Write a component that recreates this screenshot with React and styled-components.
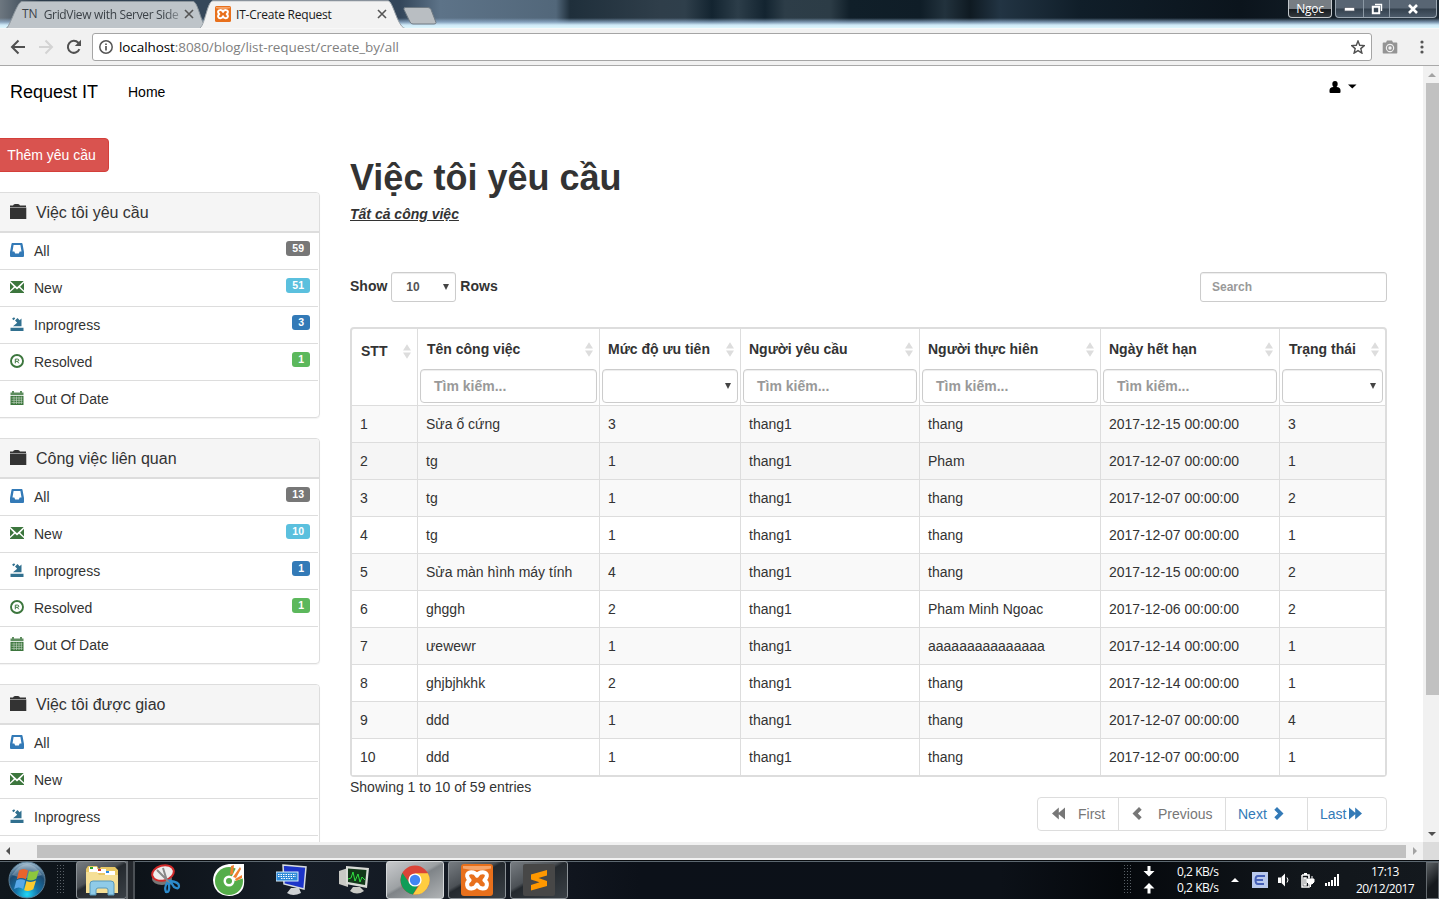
import React from 'react';
import styled, { createGlobalStyle, css } from 'styled-components';

const Global = createGlobalStyle`
  * { box-sizing: border-box; }
  body { margin: 0; background: #fff; overflow: hidden; }
  svg { display: block; flex: none; }
`;

const ui = '"Open Sans", "Noto Sans", sans-serif';
const page = '"Liberation Sans", Arial, sans-serif';

const Screen = styled.div`
  width: 1439px; height: 899px; overflow: hidden;
  display: flex; flex-direction: column;
  font: 14px/20px ${page}; color: #333; background: #fff;
`;

/* ---------- browser window ---------- */
const TitleBar = styled.div`
  height: 28px; flex: none; display: flex; align-items: flex-start; position: relative;
  background:
    linear-gradient(180deg, transparent 0 18px, rgba(148,178,208,.75) 22px, #cfeaf8 25px, #def6fc 28px),
    linear-gradient(90deg, #6d7780 0, #2c3b4a 40px, #35475a 200px, #33465a 400px, #5d7388 440px, #52677a 556px, #1f2f3b 570px, #2f3e4a 660px, #2f3f4b 685px, #132430 712px, #2c3d49 738px, #132430 765px, #2d3d48 785px, #2c3c46 830px, #101f29 850px, #0f1d27 920px, #22323d 945px, #0f1a22 970px, #223443 1000px, #101e29 1080px, #0b141c 1240px, #1d2a35 1439px);
`;
const Tab = styled.div`
  position: relative; height: 28px; display: flex; align-items: center;
  width: ${p => p.$w}px; margin-left: ${p => p.$ml || 0}px; padding-left: ${p => p.$pl}px;
  z-index: ${p => (p.$active ? 2 : 1)};
  font: 12px/16px ${ui}; color: ${p => (p.$active ? '#1a1a1a' : '#3c4248')};
  > * { position: relative; }
`;
const TabShape = styled.svg`
  && { position: absolute; left: 0; top: 0; }
`;
const TabTitle = styled.span`
  white-space: nowrap; overflow: hidden; margin-left: ${p => p.$ml || 0}px; width: ${p => p.$w}px;
  letter-spacing: ${p => p.$ls || 0}px; margin-top: 1px;
  ${p => p.$fade && css`mask-image: linear-gradient(90deg, #000 86%, rgba(0,0,0,.15) 100%);`}
`;
const NewTab = styled.div`
  width: 34px; height: 18px; margin: 7px 0 0 -2px; z-index: 3;
`;
const WindowControls = styled.div`
  margin-left: auto; display: flex; height: 19px; gap: 3px; margin-right: 2px;
`;
const UserTag = styled.div`
  width: 44px; height: 18px; border: 1px solid #c3c8cc; border-top: 0; border-radius: 0 0 4px 4px;
  background: linear-gradient(#777d83 0 50%, #15191d 52%, #34393e);
  color: #fff; font: 12px/17px ${ui}; letter-spacing: -.3px; text-align: center;
`;
const ControlGroup = styled.div`
  display: flex; height: 18px; border: 1px solid #9ba7b2; border-top: 0; border-radius: 0 0 4px 4px;
  background: linear-gradient(#586573 0 48%, #33404d 52%, #4b5a69);
`;
const Control = styled.div`
  width: ${p => p.$w}px; display: flex; align-items: center; justify-content: center;
  padding-top: ${p => p.$pt || 0}px;
  & + & { border-left: 1px solid #8b98a4; }
`;

const AddressBar = styled.div`
  height: 38px; flex: none; display: flex; align-items: center; background: #f1f1f1;
  border-bottom: 1px solid #a9a9a9; border-top: 1px solid #f8f8f8; padding-left: 10px;
`;
const NavIcons = styled.div`
  display: flex; gap: 12px; width: 82px;
`;
const UrlBox = styled.div`
  width: 1280px; height: 28px; border: 1px solid #a5a5a5; border-radius: 3px; background: #fff;
  display: flex; align-items: center; padding: 0 6px 1px 5px;
`;
const Url = styled.span`
  font: 13.5px/20px ${ui}; color: #000; margin-left: 5px; flex: 1; letter-spacing: -.08px;
  span { color: #7f7f7f; }
`;
const ToolIcons = styled.div`
  display: flex; align-items: center; gap: 22px; padding-left: 10px;
`;

/* ---------- viewport and scrollbars ---------- */
const Viewport = styled.div`
  flex: 1; min-height: 0; display: flex;
`;
const Document = styled.div`
  width: 1423px; overflow: hidden;
`;
const VScroll = styled.div`
  width: 16px; background: #f1f1f1; display: flex; flex-direction: column; align-items: center;
  padding: 6px 0 5px 1px; justify-content: space-between;
`;
const VThumb = styled.div`
  width: 13px; height: 612px; background: #c1c1c1; margin: 5px 0 auto 1px;
`;
const HScroll = styled.div`
  height: 18px; flex: none; background: #f1f1f1; display: flex; align-items: center; padding-left: 5px;
`;
const HThumb = styled.div`
  width: 1369px; height: 13px; background: #c1c1c1; margin: 0 6px 0 27px;
`;
const Corner = styled.div`
  margin-left: auto; width: 16px; height: 18px; background: #dcdcdc;
`;

/* ---------- page ---------- */
const Navbar = styled.div`
  height: 52px; display: flex; align-items: center; padding-left: 10px; color: #000;
`;
const Brand = styled.div`
  font-size: 18px; width: 118px;
`;
const UserMenu = styled.div`
  margin: -11px 66px 0 auto; display: flex; align-items: center; gap: 7px;
`;
const Columns = styled.div`
  display: flex;
`;
const Sidebar = styled.div`
  width: 320px; padding-top: 20px; flex: none;
`;
const AddButton = styled.button`
  display: block; height: 34px; width: 115px; margin: 0 0 20px -6px; padding: 0 12px;
  font: 14px/20px ${page}; color: #fff; background: #d9534f; border: 1px solid #d43f3a; border-radius: 4px;
  white-space: nowrap;
`;
const Panel = styled.section`
  margin: 0 0 20px -6px; height: 226px; border: 1px solid #ddd; border-radius: 4px;
  box-shadow: 0 1px 1px rgba(0,0,0,.05); overflow: hidden;
`;
const PanelHeading = styled.h4`
  margin: 0; height: 40px; background: #f5f5f5; border-bottom: 2px solid #ddd;
  display: flex; align-items: center; padding: 1px 0 0 15px; font-size: 16px; font-weight: 400; gap: 9px;
  svg { margin-top: -2px; }
`;
const PanelItem = styled.div`
  height: 37px; margin-right: 1px; display: flex; align-items: center; padding: 0 8px 0 14px;
  border-bottom: 1px solid #ddd;
  &:nth-child(6) { border-bottom: 0; height: 36px; }
`;
const ItemIcon = styled.span`
  width: 25px; margin-top: -2px; padding-left: 1px;
`;
const Badge = styled.span`
  margin: -6px 0 0 auto; height: 15px; padding: 0 6px; border-radius: 3px; color: #fff;
  font: bold 10.5px/15px ${page}; background: ${p => p.$bg};
`;

const Main = styled.main`
  width: 1037px; margin-left: 30px; padding-top: 36px;
`;
const Title = styled.h1`
  margin: 0; font-size: 36px; line-height: 47px; font-weight: 700;
`;
const Subtitle = styled.div`
  font-weight: 700; font-style: italic; text-decoration: underline; line-height: 20px; margin-top: 3px;
`;
const Tools = styled.div`
  display: flex; align-items: center; margin-top: 48px; height: 30px; font-weight: 700; gap: 4px;
`;
const SizeSelect = styled.div`
  width: 65px; height: 30px; border: 1px solid #ccc; border-radius: 3px; padding: 0 5px 0 14px;
  display: flex; align-items: center; justify-content: space-between; color: #555; font-size: 12px;
  box-shadow: inset 0 1px 1px rgba(0,0,0,.075);
`;
const ToolText = styled.span`
  margin-top: -2px; 
`;
const SearchBox = styled.div`
  margin-left: auto; width: 187px; height: 30px; border: 1px solid #ccc; border-radius: 3px;
  padding: 0 11px; font-size: 12px; line-height: 28px; color: #999;
  box-shadow: inset 0 1px 1px rgba(0,0,0,.075);
`;
const TableFrame = styled.div`
  margin-top: 25px; border: 2px solid #ddd; border-bottom-width: 1px; border-radius: 4px;
`;
const Table = styled.table`
  width: 1033px; table-layout: fixed; border-collapse: separate; border-spacing: 0;
`;
const HeadCell = styled.th`
  height: 77px; padding: 0 2px 2px; vertical-align: top; text-align: left; font-weight: 700;
  border-bottom: 1px solid #ddd; border-right: 1px solid #ddd;
  &:last-child { border-right: 0; }
`;
const HeadLabel = styled.div`
  display: flex; align-items: center; justify-content: space-between; height: 40px;
  margin-top: ${p => (p.$low ? 2 : 0)}px; padding: 0 4px 0 ${p => (p.$low ? 7 : p.$pad)}px;
`;
const Filter = styled.div`
  height: 34px; border: 1px solid #ccc; border-radius: 4px; padding: 0 5px 0 13px; color: #999;
  display: flex; align-items: center; justify-content: ${p => (p.$select ? 'flex-end' : 'flex-start')};
  box-shadow: inset 0 1px 1px rgba(0,0,0,.075);
`;
const Row = styled.tr`
  background: ${p => p.$bg};
`;
const Cell = styled.td`
  height: 37px; padding: 0 8px; border-bottom: 1px solid #ddd; border-right: 1px solid #ddd;
  &:last-child { border-right: 0; }
`;
const Info = styled.div`
  height: 20px;
`;
const Pager = styled.div`
  display: flex; margin-left: auto; width: 350px; height: 34px; border: 1px solid #ddd; border-radius: 4px;
`;
const PageLink = styled.div`
  width: ${p => p.$w}px; display: flex; align-items: center; gap: ${p => p.$gap}px; padding-left: ${p => p.$pl}px;
  color: ${p => (p.$disabled ? '#777' : '#337ab7')};
  & + & { border-left: 1px solid #ddd; }
  svg { margin-top: -1px; }
`;

/* ---------- taskbar ---------- */
const Taskbar = styled.div`
  height: 39px; flex: none; display: flex; align-items: center; border-top: 1px solid #0a0d10;
  box-shadow: inset 0 1px 0 #5d6870; color: #fff;
  background: linear-gradient(90deg, #10171d 0, #0c1218 130px, #161d27 300px, #11161f 560px, #0c1119 640px, #0c1118 1000px, #05080c 1120px, #11161b 1300px, #14191e 1439px);
`;
const Start = styled.div`
  width: 76px; display: flex; align-items: center; gap: 11px; padding-left: 8px;
`;
const TaskButton = styled.div`
  width: ${p => p.$w || 58}px; height: 38px; display: flex; align-items: center; justify-content: center;
  margin-right: ${p => p.$mr || 4}px;
  ${p => p.$mode && css`
    border: 1px solid ${p.$mode === 'active' ? '#d5d8da' : '#8b9196'}; border-radius: 3px;
    background: ${p.$mode === 'active'
      ? 'linear-gradient(150deg, #c8cacc 0, #9da1a4 45%, #7f8488 50%, #b0b3b5 100%)'
      : 'linear-gradient(150deg, #777c81 0, #4c5156 40%, #24292e 46%, #3a4046 100%)'};
  `}
`;
const Stack = styled.div`
  width: 9px; height: 38px; margin-left: -4px; border-left: 2px solid #666b70; border-right: 2px solid #4b5055;
  background: #24282d; margin-right: 1px;
`;
const Tray = styled.div`
  margin-left: auto; display: flex; align-items: center; height: 38px; font: 12px/16px ${ui};
`;
const Speed = styled.div`
  width: 50px; margin-left: 22px; letter-spacing: -.45px; white-space: nowrap;
`;
const TrayIcons = styled.div`
  display: flex; align-items: center; margin-left: 4px; gap: 10px;
`;
const Clock = styled.div`
  width: 64px; margin-left: 13px; text-align: center; line-height: 17px; letter-spacing: -.55px; white-space: nowrap;
`;
const ShowDesktop = styled.div`
  width: 13px; height: 37px; margin-left: 9px; border: 1px solid #656b70; background: linear-gradient(135deg, #5b6063, #15191d 60%);
`;

/* ---------- drawings ---------- */
const Close = () => (
  <svg width="10" height="10" viewBox="0 0 10 10"><path d="M1 1l8 8M9 1l-8 8" stroke="#555" strokeWidth="1.6" /></svg>
);
const Xampp = ({ s }) => (
  <svg width={s} height={s} viewBox="0 0 32 32">
    <rect width="32" height="32" rx="3" fill="#e8701c" />
    <path d="M2 2h28v2.500q-14 3-28 0z" fill="#f6a56b" />
    <path d="M16 11.800C14 7 5.500 7 6.200 12.200Q6.600 14.500 8.600 16.200Q5.600 18 6.200 21.300C7 25.800 14 25.500 16 20.600C18 25.500 25 25.800 25.800 21.300Q26.400 18 23.400 16.200Q25.400 14.500 25.800 12.200C26.500 7 18 7 16 11.800z" fill="none" stroke="#fff" strokeWidth="4" strokeLinejoin="round" />
  </svg>
);
const Tri = ({ dir, c = '#505050' }) => {
  const d = { up: 'M0 5h8L4 1z', down: 'M0 1h8L4 5z' }[dir];
  return <svg width="8" height="6" viewBox="0 0 8 6"><path d={d} fill={c} /></svg>;
};
const SideTri = ({ right, c }) => (
  <svg width="5" height="8" viewBox="0 0 5 8"><path d={right ? 'M1 0v8l4-4z' : 'M5 0v8L1 4z'} fill={c} /></svg>
);
const SelectArrow = () => (
  <svg width="8" height="6" viewBox="0 0 8 6"><path d="M1 0h6L4 6z" fill="#444" /></svg>
);
const Sort = () => (
  <svg width="8" height="15" viewBox="0 0 8 15"><path d="M0 6.500h8L4 .3zM0 8.500h8L4 14.700z" fill="#ddd" /></svg>
);
const Folder = () => (
  <svg width="17" height="15" viewBox="0 0 17 15"><path d="M0 1.500h3Q3.500 0 5 0h3q1.500 0 2 1.500h6V3H0zM0 3.600h16.300V15H0z" fill="#333" /></svg>
);
const icons = {
  all: <svg width="14" height="14" viewBox="0 0 14 14"><path fillRule="evenodd" d="M2.300 0h9.400q.6 0 .8.800L14 9v4q0 1-1 1H1q-1 0-1-1V9L1.500.800Q1.700 0 2.300 0zM3.600 2L2.500 8.500h1.800l.9 2h3.600l.9-2h1.800L10.400 2z" fill="#337ab7" /></svg>,
  fresh: <svg width="14" height="12" viewBox="0 0 14 12"><path d="M.3 0h13.400L7 6.200zM0 1.800L3.900 5.700 0 9.400zM14 1.800L10.100 5.700 14 9.400zM0 12V11.200L5 6.800 7 8.600l2-1.800 5 4.400V12z" fill="#3c763d" /></svg>,
  progress: <svg width="14" height="14" viewBox="0 0 14 14"><path d="M.5 10.800h13V14H.5zM3 9.300h8.500V1.500L9.600 3.200 7.500 1 5 3.500l2.200 2.200zM2 1.800L4 .3 5.200 1.600 3.600 3.300z" fill="#31708f" /></svg>,
  done: <svg width="14" height="14" viewBox="0 0 14 14"><circle cx="7" cy="7" r="6" fill="none" stroke="#3c763d" strokeWidth="1.900" /><path d="M5.300 9.300V5.100h2.200q1.300 0 1.300 1.100T7.500 7.300H5.500M7.300 7.300l1.500 2" fill="none" stroke="#3c763d" strokeWidth="1" /></svg>,
  late: <svg width="14" height="14" viewBox="0 0 14 14"><path d="M.5 1.500H2V0h2v1.500h6V0h2v1.500h1.500V4H.5z" fill="#5e8d5f" /><path d="M.5 4.800h13V14H.5z" fill="#3c763d" /><path d="M1.500 7h11M1.500 9.300h11M1.500 11.600h11M4 5.500v7.500M6.500 5.500v7.500M9 5.500v7.500M11.400 5.500v7.500" stroke="#b9ceb9" strokeWidth=".7" /></svg>,
};
const Chevron = ({ left, double }) => (
  <svg width={double ? 13 : 10} height="13" viewBox={double ? '0 0 13 13' : '0 0 10 13'}>
    <g transform={left ? `translate(${double ? 13 : 10} 0) scale(-1 1)` : undefined} fill="currentColor">
      {double ? <path d="M0 .500l6.200 5.300V.500L13 6.500 6.200 12.500V7.200L0 12.500z" />
        : <path d="M.3 2.700L3 0l6.500 6.500L3 13 .3 10.300l3.800-3.800z" />}
    </g>
  </svg>
);

const items = [
  ['All', 'all', '#777'], ['New', 'fresh', '#5bc0de'], ['Inprogress', 'progress', '#337ab7'],
  ['Resolved', 'done', '#5cb85c'], ['Out Of Date', 'late', ''],
];
const panels = [
  ['Việc tôi yêu cầu', ['59', '51', '3', '1'], items],
  ['Công việc liên quan', ['13', '10', '1', '1'], items],
  ['Việc tôi được giao', [], items.slice(0, 3)],
];
const columns = [
  ['STT', 66], ['Tên công việc', 182, 'text', 7], ['Mức độ ưu tiên', 141, 'select', 6], ['Người yêu cầu', 179, 'text', 6],
  ['Người thực hiên', 181, 'text', 6], ['Ngày hết hạn', 179, 'text', 6], ['Trạng thái', 105, 'select', 7],
];
const rows = [
  ['Sửa ổ cứng', 3, 'thang', '15', 3], ['tg', 1, 'Pham', '07', 1], ['tg', 1, 'thang', '07', 2],
  ['tg', 1, 'thang', '07', 1], ['Sửa màn hình máy tính', 4, 'thang', '15', 2],
  ['ghggh', 2, 'Pham Minh Ngoac', '06', 2], ['ưewewr', 1, 'aaaaaaaaaaaaaaa', '14', 1],
  ['ghjbjhkhk', 2, 'thang', '14', 1], ['ddd', 1, 'thang', '07', 4], ['ddd', 1, 'thang', '07', 1],
];
const dots = [];
for (let y = 0; y < 10; y++) for (let x = 0; x < 3; x++) dots.push([x * 3, y * 3]);
const Grip = () => (
  <svg width="8" height="30" viewBox="0 0 8 30">{dots.map(([x, y]) => <rect key={`${x}-${y}`} x={x} y={y} width="1" height="1" fill="#596066" />)}</svg>
);

function BrowserTop() {
  return (
    <>
      <TitleBar>
        <Tab $w={200} $pl={22}>
          <TabShape width="208" height="28"><path d="M6 28.500C10 27 17 1.500 22 1.500H193C198 1.500 201 24 207 28.500z" fill="#bec4c9" stroke="#8c959c" /></TabShape>
          <span>TN</span><TabTitle $ml={6} $w={140} $fade $ls={-.33}>GridView with Server Side</TabTitle><Close />
        </Tab>
        <Tab $active $w={205} $pl={15}>
          <TabShape width="206" height="28"><path d="M-1 28.500C5 27 7 .800 13 .800H188C193 .800 197 26 205 28.500z" fill="#f2f2f2" stroke="#9aa2a8" /></TabShape>
          <Xampp s={16} /><TabTitle $ml={5} $w={141} $ls={-.22}>IT-Create Request</TabTitle><Close />
        </Tab>
        <NewTab><svg width="34" height="18"><path d="M2 .500h23q2 0 3 2l5 13q0 1.500-2 1.500H10q-2 0-3-2L1 2.500Q.500.500 2 .500z" fill="#b9bec2" stroke="#6f7a83" /></svg></NewTab>
        <WindowControls>
          <UserTag>Ngọc</UserTag>
          <ControlGroup>
            <Control $w={27} $pt={2}><svg width="11" height="5"><rect x=".5" y=".5" width="10" height="3.500" fill="#fff" stroke="#555b66" strokeWidth=".7" /></svg></Control>
            <Control $w={26}><svg width="12" height="12"><path d="M4 1.500h6.500V8" fill="none" stroke="#fff" strokeWidth="1.400" /><path d="M1.800 3.800h6.400v6.400H1.800z" fill="none" stroke="#fff" strokeWidth="2" /></svg></Control>
            <Control $w={47}><svg width="12" height="10"><path d="M2 1l8 8M10 1L2 9" stroke="#fff" strokeWidth="2.600" /></svg></Control>
          </ControlGroup>
        </WindowControls>
      </TitleBar>
      <AddressBar>
        <NavIcons>
          <svg width="16" height="16" viewBox="0 0 16 16"><path d="M15 8H2.500M8.500 1.500L2 8l6.500 6.500" fill="none" stroke="#505050" strokeWidth="2" /></svg>
          <svg width="16" height="16" viewBox="0 0 16 16"><path d="M1 8h12.500M7.500 1.500L14 8l-6.500 6.500" fill="none" stroke="#d3d3d3" strokeWidth="2" /></svg>
          <svg width="16" height="16" viewBox="0 0 16 16"><path d="M13.400 10.200A6 6 0 1 1 12.300 3.800L14 5.500" fill="none" stroke="#505050" strokeWidth="2" /><path d="M15 .8V7H8.800z" fill="#505050" /></svg>
        </NavIcons>
        <UrlBox>
          <svg width="16" height="16" viewBox="0 0 16 16"><circle cx="8" cy="8" r="6.200" fill="none" stroke="#555" strokeWidth="1.500" /><path d="M8 7v4.500M8 4.500v1.600" stroke="#555" strokeWidth="1.700" /></svg>
          <Url>localhost<span>:8080/blog/list-request/create_by/all</span></Url>
          <svg width="14" height="14" viewBox="0 0 14 14"><path d="M7 1l1.700 4.300 4.600.3-3.500 3 1.100 4.500L7 10.600l-3.900 2.500 1.100-4.500-3.500-3 4.600-.3z" fill="none" stroke="#505050" strokeWidth="1.400" /></svg>
        </UrlBox>
        <ToolIcons>
          <svg width="16" height="14" viewBox="0 0 16 14"><path fillRule="evenodd" d="M5 .5h5l1 2h3.500q.8 0 .8.800V12.700q0 .8-.8.800H1.500q-.8 0-.8-.8V3.300q0-.8.8-.8H4zM8 3.800a4.200 4.200 0 1 0 .01 0z" fill="#949494" /><circle cx="8" cy="8" r="2.400" fill="none" stroke="#949494" strokeWidth="1.400" /></svg>
          <svg width="4" height="14" viewBox="0 0 4 14"><circle cx="2" cy="2" r="1.600" fill="#555" /><circle cx="2" cy="7" r="1.600" fill="#555" /><circle cx="2" cy="12" r="1.600" fill="#555" /></svg>
        </ToolIcons>
      </AddressBar>
    </>
  );
}

function StatusPanel({ title, counts, entries }) {
  return (
    <Panel>
      <PanelHeading><Folder />{title}</PanelHeading>
      {entries.map(([label, icon, color], i) => (
        <PanelItem key={label}>
          <ItemIcon>{icons[icon]}</ItemIcon>{label}
          {counts[i] && <Badge $bg={color}>{counts[i]}</Badge>}
        </PanelItem>
      ))}
    </Panel>
  );
}

function RequestTable() {
  return (
    <TableFrame>
      <Table>
        <colgroup>{columns.map(([n, w]) => <col key={n} width={w} />)}</colgroup>
        <thead>
          <tr>
            {columns.map(([name, , kind, pad]) => (
              <HeadCell key={name}>
                <HeadLabel $low={!kind} $pad={pad}>{name}<Sort /></HeadLabel>
                {kind && <Filter $select={kind === 'select'}>{kind === 'select' ? <SelectArrow /> : 'Tìm kiếm...'}</Filter>}
              </HeadCell>
            ))}
          </tr>
        </thead>
        <tbody>
          {rows.map(([task, priority, assignee, day, status], i) => (
            <Row key={i} $bg={i === 1 ? '#f5f5f5' : i % 2 ? '#fff' : '#f9f9f9'}>
              <Cell>{i + 1}</Cell><Cell>{task}</Cell><Cell>{priority}</Cell><Cell>thang1</Cell>
              <Cell>{assignee}</Cell><Cell>{`2017-12-${day} 00:00:00`}</Cell><Cell>{status}</Cell>
            </Row>
          ))}
        </tbody>
      </Table>
    </TableFrame>
  );
}

function WindowsTaskbar() {
  return (
    <Taskbar>
      <Start>
        <svg width="38" height="38" viewBox="0 0 38 38">
          <defs><radialGradient id="orb" cx=".5" cy=".9" r=".9"><stop offset="0" stopColor="#20d8f8" /><stop offset=".35" stopColor="#1673a8" /><stop offset=".7" stopColor="#1c4a70" /><stop offset="1" stopColor="#a9c4d6" /></radialGradient></defs>
          <circle cx="19" cy="19" r="18" fill="url(#orb)" stroke="#5b7f98" />
          <path d="M4 14Q19 -8 34 14Q19 20 4 14z" fill="#fff" opacity=".25" />
          <path d="M11 9.500q4.500-3 9 0l-2.200 8.700q-4.500-2.500-9 0z" fill="#e8642c" /><path d="M21 10q4.500 2 10-1l-2.700 8.700q-4.500 3-9.300 1z" fill="#8cc63c" />
          <path d="M8.300 19.500q4.500-2.300 9 0l-2.200 8.500q-4.500-3-9 0z" fill="#58a8e8" /><path d="M18.500 20q4.500 2 9.500-.5l-2.700 8.700q-4.500 3-9.200 1z" fill="#fccb30" />
        </svg>
        <Grip />
      </Start>
      <TaskButton $w={51} $mr={3} $mode="open">
        <svg width="34" height="32" viewBox="0 0 34 32">
          <path d="M1 5l2-3h9l2 3 2-2h14l3 3v23H1z" fill="#e8c865" /><path d="M4 3h8v5H4zM12 5h9v4h-9zM20 7h10v4H20z" fill="#fff" />
          <path d="M5 3h3v2H5z" fill="#28a428" /><path d="M13 5h3v2h-3z" fill="#d43a2a" /><path d="M21 7h3v2h-3z" fill="#2a8ae0" />
          <path d="M1 8h11l2 3h19v18H1z" fill="#f5df96" /><path d="M5 31V20q0-3 3-3h18q3 0 3 3v11h-6v-5q0-2-2-2h-8q-2 0-2 2v5z" fill="#8fcbe8" stroke="#5898ba" />
        </svg>
      </TaskButton>
      <Stack />
      <TaskButton $w={60}>
        <svg width="30" height="32" viewBox="0 0 30 32">
          <ellipse cx="11" cy="15" rx="10" ry="6" fill="#777" /><ellipse cx="12" cy="9" rx="11" ry="7.500" fill="#eee" stroke="#d22a2a" strokeWidth="2" transform="rotate(-15 12 9)" />
          <path d="M6 6l14 14M12 4l5 16" stroke="#888" strokeWidth="2" /><path d="M19 17q9 1 9 5t-5 1zM16 19q-3 5-1 9 4 1 3-8z" fill="none" stroke="#2c8bcc" strokeWidth="2.300" />
        </svg>
      </TaskButton>
      <TaskButton $w={58}>
        <svg width="32" height="34" viewBox="0 0 32 34">
          <path d="M16 1h15v14q2 17-15 18Q1 32 0 17 1 3 16 1z" fill="#fff" /><circle cx="16" cy="18" r="14" fill="#55ad4a" /><circle cx="16" cy="18" r="5.500" fill="#fff" /><circle cx="16" cy="18" r="3" fill="#55ad4a" />
          <path d="M18 15L25 1h6v14l-9 3z" fill="#fff" /><path d="M17 12l1-9 3-1-1 9zM20 14l7-10 1 2-5 9zM22 16l7-4v3l-6 3z" fill="#f08030" />
        </svg>
      </TaskButton>
      <TaskButton $w={59} $mr={3}>
        <svg width="32" height="32" viewBox="0 0 32 32"><path d="M7 1l23 2-2 22L8 20z" fill="#1d34c8" stroke="#d8dce0" strokeWidth="1.500" /><path d="M15 24h8l2 5q-8 4-14 0z" fill="#cfd2d4" /><rect x="0" y="8" width="22" height="9" fill="#2f8ad8" stroke="#d8ecfa" /><path d="M2 10.500h18M2 12.500h18M5 14.500h12" stroke="#fff" strokeDasharray="1.500 1" /></svg>
      </TaskButton>
      <TaskButton $w={59} $mr={3}>
        <svg width="32" height="30" viewBox="0 0 32 30"><path d="M1 6l9-3v19l-9-3z" fill="#c9c9c4" /><path d="M8 1l23 2-2 20-21-4z" fill="#d9dbd6" /><path d="M10 3.500l18.500 1.500-1.500 15L10 17z" fill="#123818" /><path d="M10 14l3-1 2-6 2 9 3-7 2 8 2-5 3 3" fill="none" stroke="#30e040" /><path d="M15 22h7l4 4q-7 5-14 0z" fill="#c9c9c4" /></svg>
      </TaskButton>
      <TaskButton $mode="active">
        <svg width="30" height="30" viewBox="0 0 30 30"><circle cx="15" cy="15" r="14.500" fill="#db4437" /><path d="M2.400 8A14.500 14.500 0 0 0 13 29.400L19.500 18 15 15 9.500 18z" fill="#0f9d58" /><path d="M15 8.300h12.900A14.500 14.500 0 0 1 13 29.400L20.800 18z" fill="#ffcd40" /><circle cx="15" cy="15" r="6.600" fill="#fff" /><circle cx="15" cy="15" r="5.200" fill="#4285f4" /></svg>
      </TaskButton>
      <TaskButton $mode="open"><Xampp s={32} /></TaskButton>
      <TaskButton $mode="open">
        <svg width="32" height="32" viewBox="0 0 32 32"><rect width="32" height="32" rx="2" fill="#474747" /><path d="M8 10.500L24 6v5.500l-8.500 2.500L24 17v5L8 26.500V21l8.500-2.700L8 15.500z" fill="#ff9800" /></svg>
      </TaskButton>
      <Tray>
        <Grip />
        <svg width="23" height="30" viewBox="0 0 23 30"><path d="M15.500 1h3v5H22.500l-5.500 5.500-5.500-5.500h4zM15.500 28.500h3v-5H22.500L17 18l-5.500 5.500h4z" fill="#fff" /></svg>
        <Speed>0,2 KB/s<br />0,2 KB/s</Speed>
        <TrayIcons>
          <Tri dir="up" c="#fff" />
          <svg width="19" height="16" viewBox="-3 0 19 16"><rect width="16" height="16" fill="#b9c9ee" /><path d="M13 4H6Q3.500 4 3.500 8T6 12h6M4 8h7" fill="none" stroke="#4560b8" strokeWidth="2" /></svg>
          <svg width="13" height="14" viewBox="0 0 13 14"><path d="M0 4.500h3V10H0zM3.500 4L7 .5v13L3.500 10z" fill="#fff" /><path d="M9 4.500q2 2.500 0 5" fill="none" stroke="#fff" /></svg>
          <svg width="14" height="15" viewBox="0 0 14 15"><path d="M1 2h7v3M1 2v12h7v-3M3 .800h3M3 5v7h2V5z" fill="none" stroke="#fff" strokeWidth="1.500" /><path d="M6 6h7v3l-2 2H8L6 9zM8 3v3M11 3v3M9.500 11v3" fill="#fff" stroke="#fff" /></svg>
          <svg width="15" height="12" viewBox="0 0 15 12"><path d="M0 9h2v3H0zM3 8h2v4H3zM6 6h2v6H6zM9 3h2v9H9zM12 0h2v12h-2z" fill="#fff" /></svg>
        </TrayIcons>
        <Clock>17:13<br />20/12/2017</Clock>
        <ShowDesktop />
      </Tray>
    </Taskbar>
  );
}

export default function App() {
  return (
    <Screen>
      <Global />
      <BrowserTop />
      <Viewport>
        <Document>
          <Navbar>
            <Brand>Request IT</Brand>
            <span>Home</span>
            <UserMenu>
              <svg width="12" height="12" viewBox="0 0 12 12"><path d="M6 0q2.700 0 2.700 3 0 2-1.200 3.100 4 .4 4 3.200V11q0 1-1 1h-9q-1 0-1-1V9.300q0-2.800 4-3.200Q3.300 5 3.300 3 3.300 0 6 0z" fill="#000" /></svg>
              <svg width="9" height="5" viewBox="0 0 9 5"><path d="M0 .500h8.500L4.300 4.500z" fill="#000" /></svg>
            </UserMenu>
          </Navbar>
          <Columns>
            <Sidebar>
              <AddButton>Thêm yêu cầu</AddButton>
              {panels.map(([title, counts, entries]) => <StatusPanel key={title} title={title} counts={counts} entries={entries} />)}
            </Sidebar>
            <Main>
              <Title>Việc tôi yêu cầu</Title>
              <Subtitle>Tất cả công việc</Subtitle>
              <Tools>
                <ToolText>Show</ToolText>
                <SizeSelect>10<SelectArrow /></SizeSelect>
                <ToolText>Rows</ToolText>
                <SearchBox>Search</SearchBox>
              </Tools>
              <RequestTable />
              <Info>Showing 1 to 10 of 59 entries</Info>
              <Pager>
                <PageLink $disabled $w={80} $pl={14} $gap={13}><Chevron left double />First</PageLink>
                <PageLink $disabled $w={107} $pl={13} $gap={16}><Chevron left />Previous</PageLink>
                <PageLink $w={82} $pl={12} $gap={7}>Next<Chevron /></PageLink>
                <PageLink $w={79} $pl={12} $gap={3}>Last<Chevron double /></PageLink>
              </Pager>
            </Main>
          </Columns>
        </Document>
        <VScroll><Tri dir="up" c="#a3a3a3" /><VThumb /><Tri dir="down" /></VScroll>
      </Viewport>
      <HScroll><SideTri c="#505050" /><HThumb /><SideTri right c="#a3a3a3" /><Corner /></HScroll>
      <WindowsTaskbar />
    </Screen>
  );
}
